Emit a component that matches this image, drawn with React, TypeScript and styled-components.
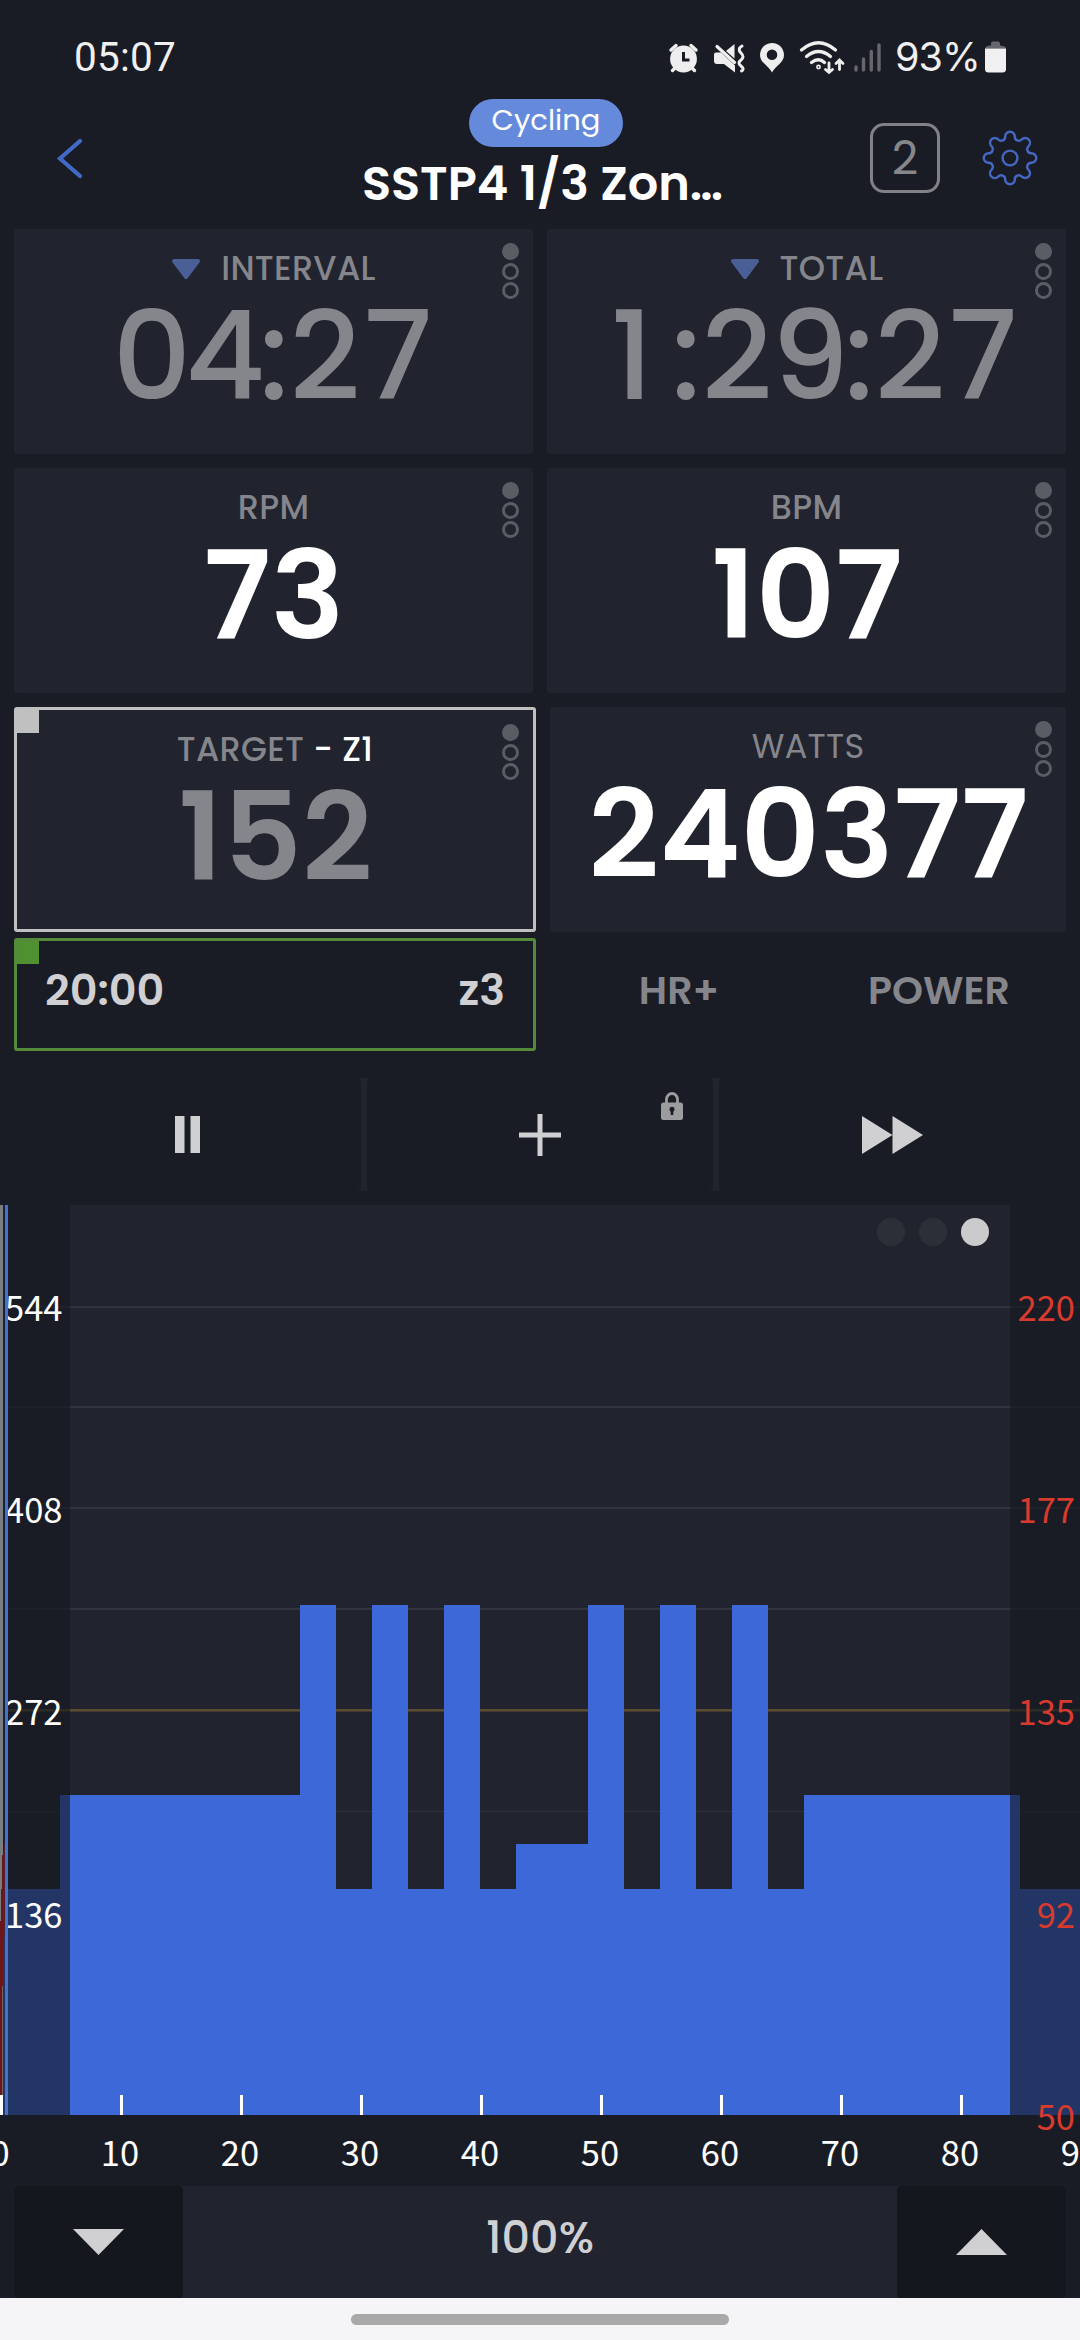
import React from "react";
import styled, { createGlobalStyle } from "styled-components";

const colors = {
  page: "#1a1c25",
  panel: "#21232e",
  well: "#15171e",
  muted: "#84868c",
  soft: "#d0d0d3",
  accent: "#3c68d8",
  silver: "#c0c0c0",
  green: "#4f9130",
};

const ui = `"Poppins", Inter, "Noto Sans", sans-serif`;
const system = `Roboto, "Noto Sans", sans-serif`;

const GlobalStyle = createGlobalStyle`
  * { box-sizing: border-box; }
  body { margin: 0; background: ${colors.page}; font-family: ${ui}; }
`;

const Screen = styled.main`
  width: 1080px;
  height: 2340px;
  display: flex;
  flex-direction: column;
  background: ${colors.page};
  overflow: hidden;
`;

const StatusBar = styled.div`
  height: 99px;
  display: flex;
  align-items: flex-start;
  justify-content: space-between;
  padding: 33px 73px 0 74px;
  color: #f0f0f0;
  font-family: ${system};
`;

const Clock = styled.span`
  font-size: 40.5px;
  line-height: 48px;
  letter-spacing: 0.2px;
`;

const StatusIcons = styled.div`
  display: flex;
  align-items: flex-start;
`;

const Battery = styled.span`
  width: 91px;
  padding-left: 1px;
  font-family: Inter, ${system};
  font-size: 39.5px;
  line-height: 48px;
  letter-spacing: -1px;
  white-space: nowrap;
`;

const Header = styled.header`
  height: 130px;
  display: grid;
  grid-template-columns: 340px 400px 340px;
`;

const HeaderSide = styled.div<{ $end?: boolean }>`
  display: flex;
  align-items: center;
  justify-content: ${(p) => (p.$end ? "flex-end" : "flex-start")};
  gap: 42px;
  height: 118px;
  padding: ${(p) => (p.$end ? "0 42px 0 0" : "0 0 0 54px")};
`;

const Title = styled.div`
  display: flex;
  flex-direction: column;
  align-items: center;
`;

const Pill = styled.span`
  width: 154px;
  height: 48px;
  margin-left: 12px;
  border-radius: 24px;
  background: #658adb;
  color: #fff;
  font-size: 29px;
  line-height: 43px;
  text-align: center;
`;

const Name = styled.h1`
  margin: 9px 0 0 5px;
  color: #fff;
  font-size: 47.8px;
  font-weight: 600;
  line-height: 56px;
  white-space: nowrap;
`;

const LapBadge = styled.span`
  width: 70px;
  height: 70px;
  border: 3px solid #808287;
  border-radius: 14px;
  color: #85878b;
  font-size: 46px;
  font-weight: 400;
  line-height: 64px;
  text-align: center;
`;

const Row = styled.div<{ $h: number; $mb: number; $gap: number }>`
  height: ${(p) => p.$h}px;
  margin: 0 14px ${(p) => p.$mb}px;
  display: flex;
  gap: ${(p) => p.$gap}px;
`;

const Card = styled.section<{ $border?: string; $w: number }>`
  position: relative;
  width: ${(p) => p.$w}px;
  height: 225px;
  border-radius: 3px;
  background: ${colors.panel};
  border: ${(p) => (p.$border ? `3px solid ${p.$border}` : "none")};
  display: flex;
  flex-direction: column;
  align-items: center;
`;

const Flag = styled.i<{ $color: string }>`
  position: absolute;
  left: 0;
  top: 0;
  width: 22px;
  height: 23px;
  background: ${(p) => p.$color};
`;

const Pager = styled.div`
  position: absolute;
  right: 14px;
  top: 14px;
  display: flex;
  flex-direction: column;
  gap: 2.6px;
`;

const PagerDot = styled.i<{ $on?: boolean }>`
  width: 17px;
  height: 17px;
  border-radius: 50%;
  border: 3px solid #5a5d64;
  background: ${(p) => (p.$on ? "#5a5d64" : "transparent")};
`;

const Label = styled.div<{ $weight?: number }>`
  display: flex;
  align-items: center;
  margin-top: 20px;
  height: 40px;
  color: ${colors.muted};
  font-size: 33.5px;
  font-weight: ${(p) => p.$weight ?? 500};
  letter-spacing: 0.3px;
  white-space: pre;

  svg { margin-right: 20px; }
  b { color: #fff; font-weight: 500; }
`;

const Value = styled.div<{ $bright?: boolean }>`
  height: 140px;
  margin: -3px 0 0 1px;
  color: ${(p) => (p.$bright ? "#fff" : colors.muted)};
  font-size: 123px;
  font-weight: 600;
  line-height: 140px;
  white-space: nowrap;
`;

const Timer = styled.div<{ $shift?: number }>`
  display: flex;
  height: 140px;
  margin: -3px 0 0 ${(p) => p.$shift ?? 0}px;
  color: ${colors.muted};
  font-size: 123px;
  font-weight: 500;
  line-height: 140px;
`;

const cellWidth = (c: string) => (c === ":" ? 27 : c === "1" ? 83 : 73);

const Cell = styled.span<{ $char: string }>`
  width: ${(p) => cellWidth(p.$char)}px;
  padding-right: ${(p) => (p.$char === ":" ? 2 : 0)}px;
  display: flex;
  justify-content: center;
`;

const NextBox = styled.div`
  position: relative;
  width: 522px;
  height: 113px;
  border: 3px solid #548a3a;
  border-radius: 3px;
  display: flex;
  justify-content: space-between;
  padding: 19px 28px 0 28px;
  color: ${colors.soft};
  font-size: 43px;
  font-weight: 600;
  line-height: 60px;
`;

const Modes = styled.div`
  flex: 1;
  display: flex;
  padding-top: 23px;
`;

const Mode = styled.span<{ $w: number }>`
  width: ${(p) => p.$w}px;
  text-align: center;
  color: ${colors.muted};
  font-size: 39.5px;
  font-weight: 600;
  line-height: 60px;
`;

const Controls = styled.div`
  height: 113px;
  margin: 0 14px 14px;
  display: grid;
  grid-template-columns: 347px 346px 347px;
  gap: 6px;
  border-radius: 4px;
  background: ${colors.panel};
`;

const Control = styled.button`
  position: relative;
  display: flex;
  align-items: center;
  justify-content: center;
  padding: 0;
  border: 0;
  border-radius: 5px;
  background: ${colors.page};
`;

const LockMark = styled.svg`
  position: absolute;
  right: 30px;
  top: 14px;
`;

const ChartArea = styled.div`
  position: relative;
  height: 981px;
`;

const ChartSvg = styled.svg`
  display: block;

  text {
    font-family: "Noto Sans CJK SC", "Noto Sans CJK JP", sans-serif;
    font-size: 34.5px;
  }
`;

const ChartDots = styled.div`
  position: absolute;
  right: 91px;
  top: 13px;
  display: flex;
  gap: 14px;
`;

const ChartDot = styled.i<{ $on?: boolean }>`
  width: 28px;
  height: 28px;
  border-radius: 50%;
  background: ${(p) => (p.$on ? "#cbcbcb" : "#2d2f38")};
`;

const Intensity = styled.div`
  height: 112px;
  margin: 0 14px;
  display: grid;
  grid-template-columns: 169px 1fr 169px;
  background: ${colors.panel};
`;

const Step = styled.button`
  display: flex;
  align-items: center;
  justify-content: center;
  padding: 0;
  border: 0;
  border-radius: 4px;
  background: ${colors.well};
`;

const Percent = styled.span`
  color: ${colors.soft};
  font-size: 44.5px;
  font-weight: 500;
  line-height: 103px;
  text-align: center;
`;

const NavBar = styled.footer`
  flex: 1;
  display: flex;
  justify-content: center;
  background: #f5f5f8;
`;

const Handle = styled.i`
  width: 378px;
  height: 11px;
  margin-top: 16px;
  border-radius: 6px;
  background: #a9a9a9;
`;

const LevelIcons = () => (
  <svg width="229" height="50" viewBox="665 33 229 50" fill="none">
    <g fill="#eee" stroke="#eee" strokeLinecap="round">
      <circle cx="683.5" cy="59" r="13.4" stroke="none" />
      <path d="M671 50l5-4.500M696 50l-5-4.500M675 68l-2.500 2.500M692 68l2.500 2.500" strokeWidth="3.400" />
      <path d="M683.500 52v8h6" stroke={colors.page} strokeWidth="3" fill="none" strokeLinecap="butt" />
      <path d="M714 54.500q0-2 2-2h5l14 13v7l-11-8.500h-7q-3 0-3-3z" stroke="none" />
      <path d="M726 51l8.500-7v14.500z" stroke="none" />
      <path d="M717 46.500l17.500 16" strokeWidth="3.200" />
      <path d="M742 46q-5 3-1 7t0 7q-4 3 0 6t0.500 5" strokeWidth="3" fill="none" />
      <path d="M772 43c7 0 12 5.500 12 12 0 8-8 10-12 17.500-4-7.500-12-9.500-12-17.500 0-6.500 5-12 12-12zm0 6.500a5.300 5.300 0 1 0 0 10.600 5.300 5.300 0 0 0 0-10.600z" fillRule="evenodd" stroke="none" />
      <g fill="none" strokeWidth="3.300">
        <path d="M801.500 50q17-14.500 34 0M806.500 56.500q12-10 24 0M811.500 62.500q7-5.500 13 0" />
        <circle cx="818.500" cy="67" r="0.800" />
        <path d="M829 63v9M825.500 69.500l3.500 3 3.500-3M839.500 69.500v-8M836 63.500l3.500-3.500 3.500 3.500" strokeWidth="2.800" />
      </g>
    </g>
    <path d="M856 67v3M863.500 59V70M871.300 51.500V70M879 45V70" stroke="#65676c" strokeWidth="3.400" strokeLinecap="round" />
  </svg>
);

const BatteryIcon = () => (
  <svg width="22" height="50" viewBox="0 0 22 50">
    <path d="M6 10.500q0-2 2-2h5q2 0 2 2v2q6 .500 6 3H.300q0-3 5.700-3z" fill="#65676c" />
    <path d="M0 15.500h21v20.500q0 3.500-3.500 3.500h-14Q0 39.500 0 36z" fill="#f0f0f0" />
  </svg>
);

/* Eight round teeth joined by round valleys, all arcs tangent. */
const gearPath = () => {
  const c = 28;
  const tooth = { r: 21.7, rad: 4.8 };
  const valley = { r: 23, rad: 4 };
  const at = (r: number, deg: number) => {
    const a = (deg * Math.PI) / 180;
    return [c + r * Math.sin(a), c - r * Math.cos(a)];
  };
  const join = (t: number[], v: number[]) => {
    const k = tooth.rad / (tooth.rad + valley.rad);
    return `${(t[0] + (v[0] - t[0]) * k).toFixed(2)} ${(t[1] + (v[1] - t[1]) * k).toFixed(2)}`;
  };
  let d = `M${join(at(tooth.r, 0), at(valley.r, -22.5))}`;
  for (let i = 0; i < 8; i++) {
    const t = at(tooth.r, i * 45);
    const v = at(valley.r, i * 45 + 22.5);
    const next = at(tooth.r, (i + 1) * 45);
    d += `A${tooth.rad} ${tooth.rad} 0 1 1 ${join(t, v)}`;
    d += `A${valley.rad} ${valley.rad} 0 0 0 ${join(next, v)}`;
  }
  return d + "Z";
};

const Gear = () => (
  <svg width="56" height="56" viewBox="0 0 56 56" fill="none" stroke="#4468c2" strokeWidth="2.400" strokeLinejoin="round">
    <path d={gearPath()} />
    <circle cx="28" cy="28" r="7.400" />
  </svg>
);

const Countdown = () => (
  <svg width="30" height="22" viewBox="0 0 30 22">
    <path d="M3 3h24L15 19z" fill="#495f96" stroke="#495f96" strokeWidth="4" strokeLinejoin="round" />
  </svg>
);

const Dots = () => (
  <Pager>
    <PagerDot $on />
    <PagerDot />
    <PagerDot />
  </Pager>
);

const TimerText = ({ text, shift }: { text: string; shift?: number }) => (
  <Timer $shift={shift}>
    {text.split("").map((c, i) => (
      <Cell key={i} $char={c}>{c}</Cell>
    ))}
  </Timer>
);

/* Workout blocks: [start minute, end minute, top y] */
const blocks: [number, number, number][] = [
  [0, 5, 684], [5, 25, 590], [25, 28, 400], [28, 31, 684], [31, 34, 400], [34, 37, 684],
  [37, 40, 400], [40, 43, 684], [43, 49, 639], [49, 52, 400], [52, 55, 684], [55, 58, 400],
  [58, 61, 684], [61, 64, 400], [64, 67, 684], [67, 85, 590], [85, 90, 684],
];

const Chart = () => (
  <ChartSvg width="1080" height="981" viewBox="0 0 1080 981">
    <rect width="1080" height="910" fill={colors.panel} />
    {[101, 201, 302, 403].map((y) => (
      <rect key={y} y={y} width="1080" height="2" fill="#31343f" />
    ))}
    <rect y="504" width="1080" height="2.600" fill="#5a4b30" />
    <rect y="606" width="1080" height="1" fill="#2e313b" />
    <path
      d={`M0 910${blocks.map(([a, b, y]) => `L${a * 12} ${y}L${b * 12} ${y}`).join("")}L1080 910Z`}
      fill={colors.accent}
      shapeRendering="crispEdges"
    />
    <rect width="70" height="910" fill="rgb(21,24,32)" fillOpacity="0.63" />
    <rect x="1010" width="70" height="910" fill="rgb(21,24,32)" fillOpacity="0.63" />
    <rect width="3" height="910" fill="#7b7d80" />
    <path d="M2 650H3V781H2.300V890H0V716H1V684H2Z" fill="#6b1719" />
    <rect x="3" width="2" height="684" fill="#17223c" />
    <path d="M5 636L3 650V755L5 720Z" fill="#5a1f2c" />
    {[0, 1, 2, 3, 4, 5, 6, 7, 8].map((n) => (
      <rect key={n} x={n * 120} y="890" width="3" height="20" fill="#fff" />
    ))}
    <g fill="#fff" textAnchor="middle">
      {[0, 1, 2, 3, 4, 5, 6, 7, 8, 9].map((n) => (
        <text key={n} x={n * 120} y="961">{n * 10}</text>
      ))}
    </g>
    <g fill="#fff" textAnchor="end">
      <text x="62.500" y="116">544</text>
      <text x="62.500" y="318">408</text>
      <text x="62.500" y="520">272</text>
      <text x="62.500" y="723">136</text>
    </g>
    <g fill="#d93a2e" textAnchor="end">
      <text x="1075" y="116">220</text>
      <text x="1075" y="318">177</text>
      <text x="1075" y="520">135</text>
      <text x="1075" y="723">92</text>
      <text x="1075" y="925">50</text>
    </g>
    <rect x="5" width="3" height="910" fill="#4573cb" />
  </ChartSvg>
);

export default function App() {
  return (
    <Screen>
      <GlobalStyle />
      <StatusBar>
        <Clock>05:07</Clock>
        <StatusIcons>
          <LevelIcons />
          <Battery>93%</Battery>
          <BatteryIcon />
        </StatusIcons>
      </StatusBar>
      <Header>
        <HeaderSide>
          <svg width="32" height="44" viewBox="0 0 32 44" fill="none" stroke="#4169c6" strokeWidth="4.200" strokeLinecap="round">
            <path d="M26 5L6 22.500L26 40" />
          </svg>
        </HeaderSide>
        <Title>
          <Pill>Cycling</Pill>
          <Name>SSTP4 1/3 Zon…</Name>
        </Title>
        <HeaderSide $end>
          <LapBadge>2</LapBadge>
          <Gear />
        </HeaderSide>
      </Header>

      <Row $h={225} $mb={14} $gap={14}>
        <Card $w={519}>
          <Label><Countdown />INTERVAL</Label>
          <TimerText text="04:27" shift={3} />
          <Dots />
        </Card>
        <Card $w={519}>
          <Label><Countdown />TOTAL</Label>
          <TimerText text="1:29:27" shift={-3} />
          <Dots />
        </Card>
      </Row>
      <Row $h={225} $mb={14} $gap={14}>
        <Card $w={519}>
          <Label>RPM</Label>
          <Value $bright>73</Value>
          <Dots />
        </Card>
        <Card $w={519}>
          <Label>BPM</Label>
          <Value $bright>107</Value>
          <Dots />
        </Card>
      </Row>
      <Row $h={225} $mb={6} $gap={14}>
        <Card $w={522} $border={colors.silver}>
          <Flag $color={colors.silver} />
          <Label>TARGET <b>- Z1</b></Label>
          <Value>152</Value>
          <Dots />
        </Card>
        <Card $w={516}>
          <Label $weight={400}>WATTS</Label>
          <Value $bright>240377</Value>
          <Dots />
        </Card>
      </Row>
      <Row $h={113} $mb={27} $gap={10}>
        <NextBox>
          <Flag $color={colors.green} />
          <span>20:00</span>
          <span>z3</span>
        </NextBox>
        <Modes>
          <Mode $w={266}>HR+</Mode>
          <Mode $w={254}>POWER</Mode>
        </Modes>
      </Row>

      <Controls>
        <Control aria-label="Pause">
          <svg width="25" height="37" viewBox="0 0 25 37" fill={colors.soft}>
            <path d="M0 0h9.500v37H0zM15.500 0H25v37h-9.500z" />
          </svg>
        </Control>
        <Control aria-label="Add">
          <svg width="42" height="42" viewBox="0 0 42 42" fill={colors.soft}>
            <path d="M18.500 0h5v18.500H42v5H23.500V42h-5V23.500H0v-5h18.500z" />
          </svg>
          <LockMark width="22" height="28" viewBox="0 0 22 28" fill="none">
            <path d="M5.500 12V7.500a5.500 6 0 0 1 11 0V12" stroke="#9c9c9e" strokeWidth="2.800" />
            <rect y="10.500" width="22" height="17.500" rx="2.500" fill="#9c9c9e" />
            <circle cx="11" cy="17.300" r="2.500" fill={colors.page} />
            <rect x="9.700" y="18" width="2.600" height="5" fill={colors.page} />
          </LockMark>
        </Control>
        <Control aria-label="Skip">
          <svg width="61" height="38" viewBox="0 0 61 38" fill={colors.soft}>
            <path d="M0 0L30.500 19L0 38zM30.500 0L61 19L30.500 38z" />
          </svg>
        </Control>
      </Controls>

      <ChartArea>
        <Chart />
        <ChartDots>
          <ChartDot />
          <ChartDot />
          <ChartDot $on />
        </ChartDots>
      </ChartArea>

      <Intensity>
        <Step aria-label="Decrease">
          <svg width="51" height="26" viewBox="0 0 51 26" fill={colors.soft}><path d="M0 0h51L25.500 26z" /></svg>
        </Step>
        <Percent>100%</Percent>
        <Step aria-label="Increase">
          <svg width="51" height="26" viewBox="0 0 51 26" fill={colors.soft}><path d="M0 26h51L25.500 0z" /></svg>
        </Step>
      </Intensity>
      <NavBar><Handle /></NavBar>
    </Screen>
  );
}
